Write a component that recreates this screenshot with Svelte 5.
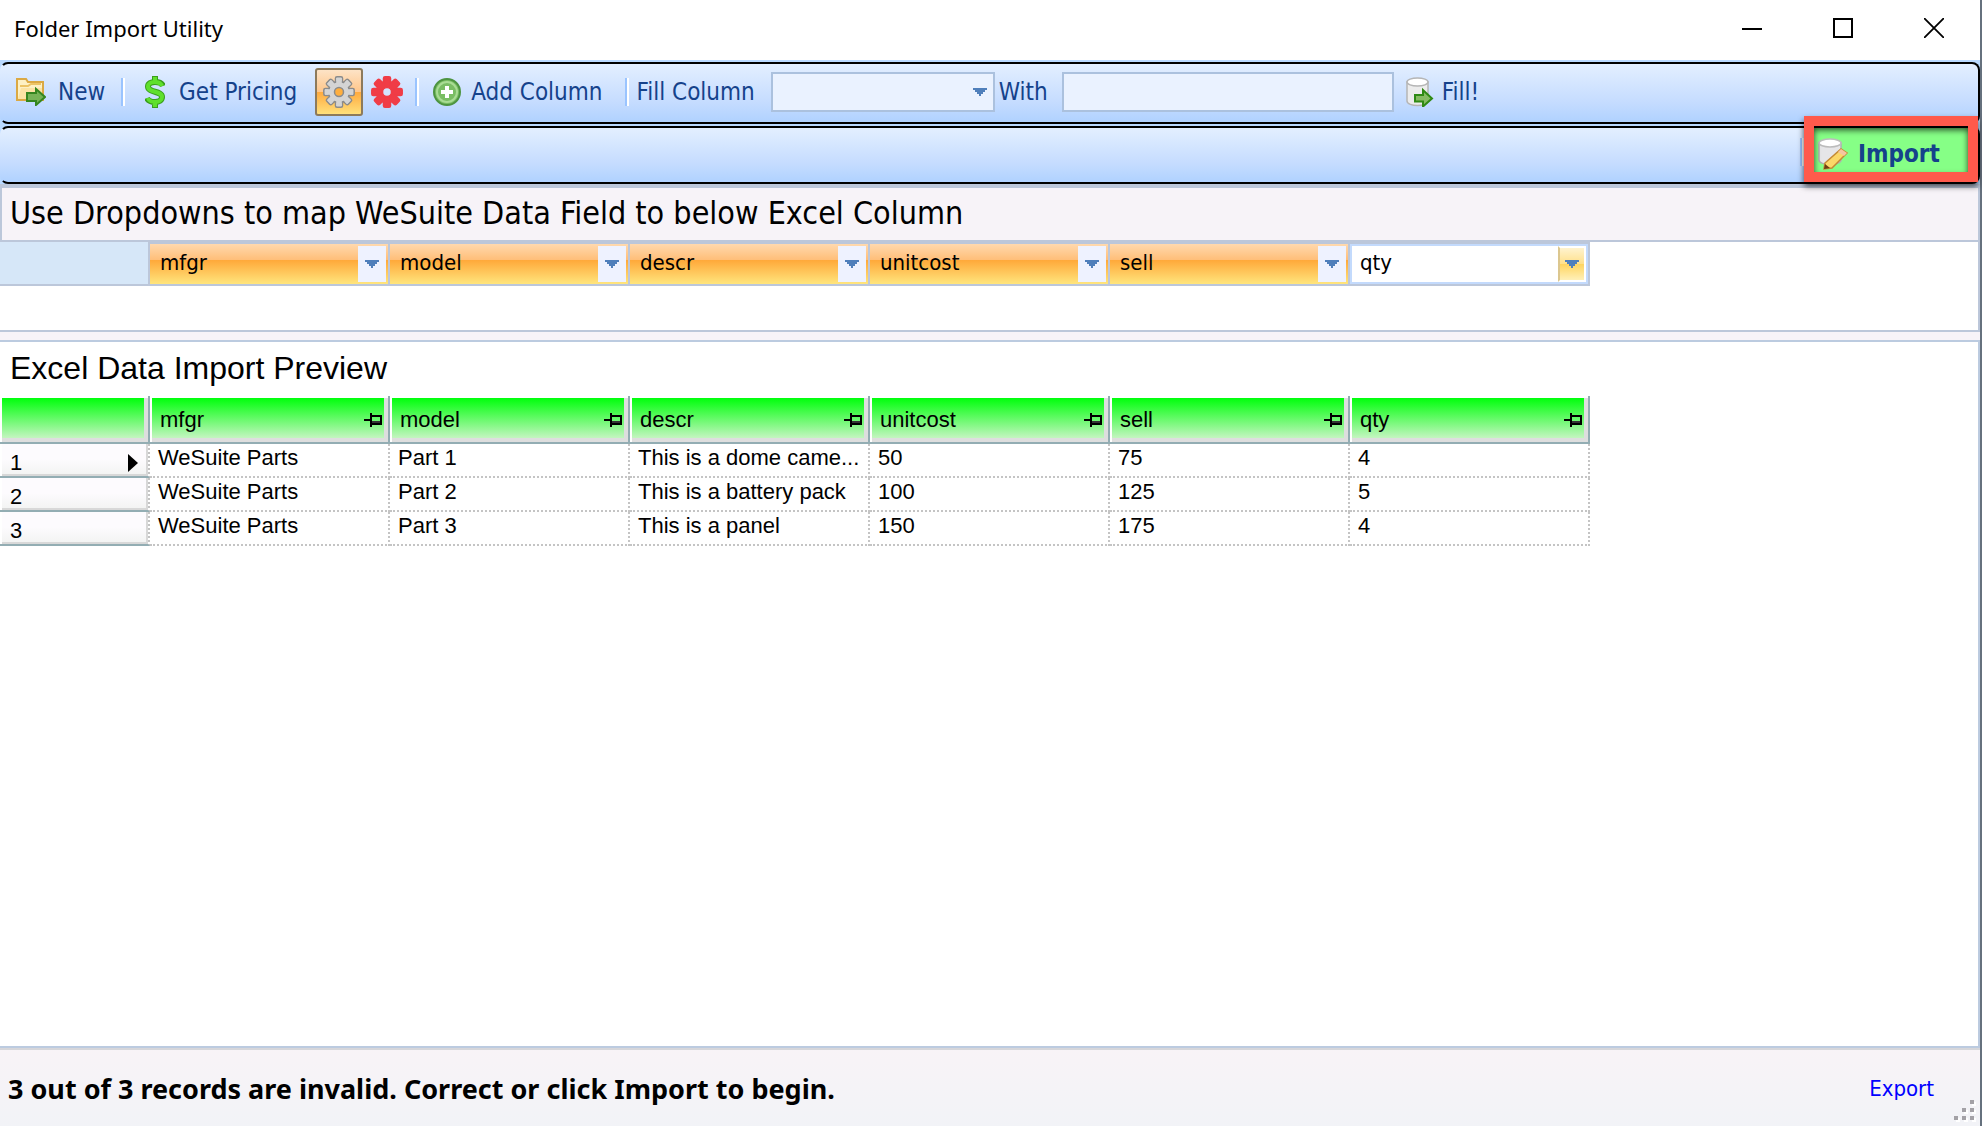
<script lang="ts">
  type Row = { id: number; cells: string[] };

  const columns = ['mfgr', 'model', 'descr', 'unitcost', 'sell', 'qty'];
  const rows: Row[] = [
    { id: 1, cells: ['WeSuite Parts', 'Part 1', 'This is a dome came...', '50', '75', '4'] },
    { id: 2, cells: ['WeSuite Parts', 'Part 2', 'This is a battery pack', '100', '125', '5'] },
    { id: 3, cells: ['WeSuite Parts', 'Part 3', 'This is a panel', '150', '175', '4'] }
  ];

  let mapping = $state([...columns]);
  let current = $state(1);
  let active = $state(5);
  let fillValue = $state('');

  // eight teeth around a hub, drawn on a 32px box
  const teeth = [0, 45, 90, 135, 180, 225, 270, 315];
</script>

{#snippet arrow()}
  <svg class="arrow" width="14" height="8" viewBox="0 0 14 8" aria-hidden="true">
    <path d="M0 0h14v2h-2v2h-2v2H8v2H6V6H4V4H2V2H0z" fill="#4f7fbb" />
  </svg>
{/snippet}

{#snippet gear(fill: string, stroke: string, hub: string)}
  <svg width="32" height="32" viewBox="0 0 32 32" aria-hidden="true">
    {#each teeth as angle}
      <rect x="12.5" y="0.8" width="7" height="9" rx="1.5" {fill} {stroke} stroke-width="1.5" transform="rotate({angle} 16 16)" />
    {/each}
    <circle cx="16" cy="16" r="10.5" {fill} {stroke} stroke-width="1.5" />
    {#each teeth as angle}
      <rect x="13.2" y="2" width="5.6" height="9" {fill} transform="rotate({angle} 16 16)" />
    {/each}
    <circle cx="16" cy="16" r="4.5" fill={hub} {stroke} stroke-width="1.5" />
  </svg>
{/snippet}

<div class="window">
  <header class="titlebar">
    <h1>Folder Import Utility</h1>
    <div class="controls">
      <button aria-label="Minimize">
        <svg width="20" height="20" viewBox="0 0 20 20"><path d="M0 11h20" stroke="#000" stroke-width="2" /></svg>
      </button>
      <button aria-label="Maximize">
        <svg width="20" height="20" viewBox="0 0 20 20"><path d="M1 1h18v18H1z" fill="none" stroke="#000" stroke-width="2" /></svg>
      </button>
      <button aria-label="Close">
        <svg width="20" height="20" viewBox="0 0 20 20"><path d="M0 0l20 20M20 0L0 20" stroke="#000" stroke-width="1.8" /></svg>
      </button>
    </div>
  </header>

  <div class="bars">
    <div class="bar">
      <button class="tool">
        <svg width="30" height="28" viewBox="0 0 30 28" aria-hidden="true">
          <path d="M1 22V1h9l2 3h15v18z" fill="#fdf0c4" stroke="#dba944" stroke-width="2" />
          <path d="M4 8h8l3-2h10" fill="none" stroke="#ecc467" stroke-width="2" />
          <path d="M2 21l3-11h21v11z" fill="#fbe3a4" />
          <path d="M11 15h9v-4l9 8-9 8v-4h-9z" fill="#76b356" stroke="#35861f" stroke-width="2" />
        </svg>
        <span>New</span>
      </button>
      <span class="sep"></span>
      <button class="tool pricing">
        <svg width="20" height="32" viewBox="0 0 20 32" aria-hidden="true">
          <path d="M18 10C16 4.500 3 4.500 3 10.500C3 17 17 14.500 17 21C17 27.500 4 27.500 2 22M10 0v6M10 26v6" fill="none" stroke="#3a9e1c" stroke-width="6" />
          <path d="M17 10C15 4.500 3 4.500 3 10.500C3 17 17 14.500 17 21C17 27.500 4 27.500 3 22M10 1v5M10 26v5" fill="none" stroke="#5fe02c" stroke-width="4" />
        </svg>
        <span>Get Pricing</span>
      </button>
      <button class="square on" aria-label="Settings" aria-pressed="true">{@render gear('#d4d4d4', '#8b8b8b', '#ffae3d')}</button>
      <button class="square" aria-label="Clear settings">{@render gear('#f03c46', '#f03c46', '#d3e4ff')}</button>
      <span class="sep after-icons"></span>
      <button class="tool add">
        <svg width="28" height="28" viewBox="0 0 28 28" aria-hidden="true">
          <circle cx="14" cy="14" r="13" fill="#79bd63" stroke="#4d9440" stroke-width="2" />
          <circle cx="14" cy="14" r="10" fill="none" stroke="#a9dc94" stroke-width="2" />
          <path d="M14 8v12M8 14h12" stroke="#fff" stroke-width="4" />
        </svg>
        <span>Add Column</span>
      </button>
      <span class="sep last"></span>
      <label for="fill-column">Fill Column</label>
      <div class="combo">
        <select id="fill-column"><option value=""></option></select>
        {@render arrow()}
      </div>
      <label for="fill-value">With</label>
      <input id="fill-value" type="text" bind:value={fillValue} />
      <button class="tool fill">
        <svg width="28" height="30" viewBox="0 0 28 30" aria-hidden="true">
          <path d="M1 5v19c0 6 21 6 21 0V5z" fill="#ececec" stroke="#b5b5b5" stroke-width="1.500" />
          <ellipse cx="11.500" cy="5" rx="10.500" ry="4" fill="#fff" stroke="#b5b5b5" stroke-width="1.500" />
          <path d="M9 18h8v-5l9 8.500-9 8v-5H9z" fill="#86bb62" stroke="#2f8a14" stroke-width="2" />
        </svg>
        <span>Fill!</span>
      </button>
    </div>

    <div class="bar end">
      <span class="sep"></span>
      <button class="import">
        <svg width="30" height="32" viewBox="0 0 30 32" aria-hidden="true">
          <path d="M1 5v17c0 6 22 6 22 0V5z" fill="#e6e6e8" stroke="#b0b0b0" stroke-width="1.500" />
          <ellipse cx="12" cy="5" rx="11" ry="4" fill="#fff" stroke="#bcbcbc" stroke-width="1.500" />
          <path d="M7 25L23 11l6 4-15 15-8 1z" fill="#fbd768" stroke="#c48a35" stroke-width="1.500" />
          <path d="M23 11l6 4-3 3-6-4z" fill="#f5c6a0" />
          <path d="M7 26l5 4-6 1z" fill="#6f3d12" />
        </svg>
        <span>Import</span>
      </button>
    </div>
  </div>

  <h2 class="map-title">Use Dropdowns to map WeSuite Data Field to below Excel Column</h2>

  <section class="mapping">
    <div class="map-row">
      <div class="stub"></div>
      {#each columns as column, i}
        <div class="map-cell" class:active={active === i}>
          <select aria-label="Field for {column}" bind:value={mapping[i]} onfocus={() => (active = i)}>
            {#each columns as option}<option>{option}</option>{/each}
          </select>
          <span class="drop">{@render arrow()}</span>
        </div>
      {/each}
    </div>
  </section>

  <main class="preview">
    <h2>Excel Data Import Preview</h2>
    <table>
      <colgroup>
        <col class="rowhead" />
        {#each columns as _}<col class="data" />{/each}
      </colgroup>
      <thead>
        <tr>
          <th><div class="head"></div></th>
          {#each columns as column}
            <th scope="col">
              <div class="head">
                <span>{column}</span>
                <svg width="18" height="14" viewBox="0 0 18 14" aria-hidden="true">
                  <path d="M0 7h7M7 0v14M7 3h10v8H7" fill="none" stroke="#000" stroke-width="2" />
                  <path d="M8 9h8" stroke="#333" stroke-width="2" />
                </svg>
              </div>
            </th>
          {/each}
        </tr>
      </thead>
      <tbody>
        {#each rows as row (row.id)}
          <tr onclick={() => (current = row.id)}>
            <th scope="row">
              <div class="num">
                <span>{row.id}</span>
                {#if current === row.id}
                  <svg width="10" height="18" viewBox="0 0 10 18" aria-hidden="true"><path d="M0 0l10 9-10 9z" /></svg>
                {/if}
              </div>
            </th>
            {#each row.cells as cell}<td>{cell}</td>{/each}
          </tr>
        {/each}
      </tbody>
    </table>
  </main>

  <footer>
    <strong>3 out of 3 records are invalid. Correct or click Import to begin.</strong>
    <a href="#export">Export</a>
    <svg class="grip" width="22" height="22" viewBox="0 0 22 22" aria-hidden="true">
      <path d="M18 2h4v4h-4zM10 10h4v4h-4zM18 10h4v4h-4zM2 18h4v4H2zM10 18h4v4h-4zM18 18h4v4h-4z" fill="#fff" />
      <path d="M16 0h4v4h-4zM8 8h4v4H8zM16 8h4v4h-4zM0 16h4v4H0zM8 16h4v4H8zM16 16h4v4h-4z" fill="#a3a1a6" />
    </svg>
  </footer>
</div>

<style>
  :global(body) { margin: 0; background: #fff; }
  .window {
    --tahoma: 'DejaVu Sans Condensed', 'DejaVu Sans', sans-serif;
    --segoe: 'Noto Sans', 'Open Sans', sans-serif;
    --arial: 'Liberation Sans', Arial, sans-serif;
    --line: #bcc7da;
    box-sizing: border-box; min-height: 100vh; display: flex; flex-direction: column;
    border-right: 2px solid #66717e; background: #f7f3f8; color: #000; font-family: var(--tahoma);
  }
  .window :global(*) { box-sizing: border-box; }
  button, select, input { font: inherit; color: inherit; margin: 0; border-radius: 0; }
  button { padding: 0; border: 0; background: none; }
  svg { display: block; flex: none; }
  h1, h2 { margin: 0; font-weight: 400; }

  .titlebar { height: 60px; display: flex; align-items: center; justify-content: space-between; padding: 0 36px 4px 14px; background: #fff; font-family: var(--segoe); }
  h1 { font-size: 22px; }
  .controls { display: flex; gap: 71px; }

  .bars { display: flex; flex-direction: column; gap: 2px; padding: 2px 0 0; background: #b9d9ff; border-bottom: 4px solid var(--line); }
  .bar {
    height: 62px; display: flex; align-items: center; padding: 0 14px 2px; border: 2px solid #000; border-left-color: transparent; border-radius: 8px;
    background: linear-gradient(#e3efff, #c5dcff 66%, #b0d2ff); color: #15428b; font-size: 24px;
  }
  .bar.end { height: 58px; align-items: flex-start; justify-content: flex-end; padding: 0 10px; }
  .tool { display: flex; align-items: center; gap: 12px; white-space: nowrap; }
  .sep { width: 4px; height: 28px; margin: 0 20px 0 16px; border-left: 2px solid #9ac4ff; border-right: 2px solid #fff; }
  .pricing { gap: 14px; margin-right: 18px; }
  .square { width: 48px; height: 48px; display: grid; place-items: center; }
  .square.on { border: 2px solid #8d7a5b; border-radius: 3px; background: linear-gradient(#fde3c6, #ffc68a 50%, #ffab3f 51%, #ffe07c); }
  .add { gap: 10px; }
  .sep.after-icons { margin: 0 14px 0 4px; }
  .sep.last { margin: 0 8px 0 22px; }
  .combo { width: 224px; display: grid; margin: 0 4px 0 16px; }
  .combo select, .combo .arrow { grid-area: 1 / 1; }
  .combo .arrow { place-self: center end; margin-right: 8px; pointer-events: none; }
  .combo select, .bar input { height: 40px; border: 2px solid #abc1de; background: #eaf2ff; appearance: none; padding: 0 8px; }
  .bar input { width: 332px; margin: 0 12px 0 14px; }
  .fill { gap: 8px; }

  .end .sep { margin: 10px 10px 0 0; }
  .import { position: relative; width: 154px; height: 44px; display: flex; align-items: center; gap: 10px; padding: 8px 0 0 4px; background: #86ff86; font-weight: 700; }
  /* call-out frame drawn over both bars */
  .import::after { content: ''; position: absolute; inset: -12px -10px -10px; border: 10px solid #ff5a4c; filter: drop-shadow(0 4px 3px rgb(0 0 0 / 0.7)); pointer-events: none; }

  .map-title { height: 54px; padding-left: 8px; border: 2px solid var(--line); border-top: 0; background: #f7f3f8; font-size: 32px; line-height: 50px; white-space: nowrap; }

  .mapping { height: 90px; border-bottom: 2px solid var(--line); border-right: 2px solid var(--line); background: #fff; font-size: 22px; }
  .map-row { display: flex; width: 1590px; height: 44px; border-bottom: 2px solid var(--line); }
  .stub { width: 148px; background: #d6e7f8; }
  .map-cell { width: 240px; display: grid; border-left: 2px solid var(--line); border-top: 2px solid var(--line); background: linear-gradient(#ffd9ae, #ffbe78 40%, #ffa93a 41%, #ffe57d); }
  .map-cell:last-child { width: 242px; border-right: 2px solid var(--line); }
  .map-cell select { grid-area: 1 / 1; width: 100%; border: 0; padding: 0 0 4px 10px; background: none; appearance: none; }
  .drop { grid-area: 1 / 1; justify-self: end; width: 28px; height: 36px; margin: 2px; display: grid; place-items: center; background: #eef2ff; pointer-events: none; }
  .active select { border: 2px solid #c3dafc; padding-left: 8px; background: #fff; }
  .active .drop { border: 2px solid #fff; border-left-color: #dcc78f; background: linear-gradient(#fff3cf, #ffe08a 50%, #ffd560 51%, #fff0b8); }

  .preview { flex: 1; margin-top: 8px; border-top: 2px solid #bccbe0; border-right: 2px solid #bccbe0; background: #fff; font-family: var(--arial); }
  .preview h2 { height: 54px; padding-left: 10px; font-size: 32px; line-height: 52px; }
  table { width: 1590px; table-layout: fixed; border-collapse: separate; border-spacing: 0; font-size: 22px; }
  col.rowhead { width: 150px; }
  col.data { width: 240px; }
  th, td { padding: 0; font-weight: 400; text-align: left; }
  thead th { border-right: 2px solid #93adb3; border-bottom: 2px solid #93adb3; }
  .head { height: 44px; display: flex; align-items: center; justify-content: space-between; margin: 2px 0 0 2px; padding: 4px 2px 0 8px; border: solid #dedede; border-width: 0 4px 4px 0; background: linear-gradient(#00ff0c, #c4f5c0); }
  tbody th { height: 34px; border-right: 2px dotted #c4c4c4; border-bottom: 2px solid #93adb3; }
  .num { height: 32px; display: flex; align-items: center; justify-content: space-between; margin-left: 2px; padding: 8px 8px 0 8px; border: solid #d8d8d8; border-width: 0 2px 2px 0; background: linear-gradient(#fdfbfe 50%, #f3f4f3); }
  td { padding: 0 2px 4px 8px; overflow: hidden; text-overflow: ellipsis; white-space: nowrap; border-right: 2px dotted #c4c4c4; border-bottom: 2px dotted #c4c4c4; }

  footer { position: relative; height: 80px; display: flex; align-items: center; justify-content: space-between; padding: 2px 46px 0 8px; border-top: 2px solid #bccbe0; background: linear-gradient(#f8f3f7, #f2f3f7); box-shadow: inset 0 2px #d6d6da; font-family: var(--segoe); }
  footer strong { font-size: 27px; }
  footer a { color: #0000ff; font-size: 22px; font-family: var(--tahoma); text-decoration: none; }
  .grip { position: absolute; right: 4px; bottom: 4px; }
</style>
